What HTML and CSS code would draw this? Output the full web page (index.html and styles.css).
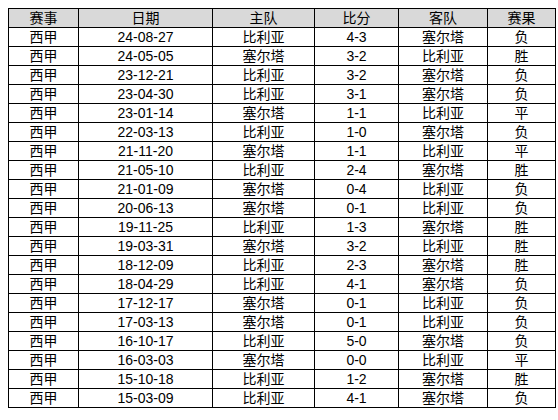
FILE: index.html
```html
<!DOCTYPE html>
<html lang="zh">
<head>
<meta charset="utf-8">
<link rel="stylesheet" href="styles.css">
</head>
<body>
<table class="results">
<colgroup>
<col class="c1"><col class="c2"><col class="c3"><col class="c4"><col class="c5"><col class="c6">
</colgroup>
<thead>
<tr><th>赛事</th><th>日期</th><th>主队</th><th>比分</th><th>客队</th><th>赛果</th></tr>
</thead>
<tbody>
<tr><td>西甲</td><td>24-08-27</td><td>比利亚</td><td>4-3</td><td>塞尔塔</td><td>负</td></tr>
<tr><td>西甲</td><td>24-05-05</td><td>塞尔塔</td><td>3-2</td><td>比利亚</td><td>胜</td></tr>
<tr><td>西甲</td><td>23-12-21</td><td>比利亚</td><td>3-2</td><td>塞尔塔</td><td>负</td></tr>
<tr><td>西甲</td><td>23-04-30</td><td>比利亚</td><td>3-1</td><td>塞尔塔</td><td>负</td></tr>
<tr><td>西甲</td><td>23-01-14</td><td>塞尔塔</td><td>1-1</td><td>比利亚</td><td>平</td></tr>
<tr><td>西甲</td><td>22-03-13</td><td>比利亚</td><td>1-0</td><td>塞尔塔</td><td>负</td></tr>
<tr><td>西甲</td><td>21-11-20</td><td>塞尔塔</td><td>1-1</td><td>比利亚</td><td>平</td></tr>
<tr><td>西甲</td><td>21-05-10</td><td>比利亚</td><td>2-4</td><td>塞尔塔</td><td>胜</td></tr>
<tr><td>西甲</td><td>21-01-09</td><td>塞尔塔</td><td>0-4</td><td>比利亚</td><td>负</td></tr>
<tr><td>西甲</td><td>20-06-13</td><td>塞尔塔</td><td>0-1</td><td>比利亚</td><td>负</td></tr>
<tr><td>西甲</td><td>19-11-25</td><td>比利亚</td><td>1-3</td><td>塞尔塔</td><td>胜</td></tr>
<tr><td>西甲</td><td>19-03-31</td><td>塞尔塔</td><td>3-2</td><td>比利亚</td><td>胜</td></tr>
<tr><td>西甲</td><td>18-12-09</td><td>比利亚</td><td>2-3</td><td>塞尔塔</td><td>胜</td></tr>
<tr><td>西甲</td><td>18-04-29</td><td>比利亚</td><td>4-1</td><td>塞尔塔</td><td>负</td></tr>
<tr><td>西甲</td><td>17-12-17</td><td>塞尔塔</td><td>0-1</td><td>比利亚</td><td>负</td></tr>
<tr><td>西甲</td><td>17-03-13</td><td>塞尔塔</td><td>0-1</td><td>比利亚</td><td>负</td></tr>
<tr><td>西甲</td><td>16-10-17</td><td>比利亚</td><td>5-0</td><td>塞尔塔</td><td>负</td></tr>
<tr><td>西甲</td><td>16-03-03</td><td>塞尔塔</td><td>0-0</td><td>比利亚</td><td>平</td></tr>
<tr><td>西甲</td><td>15-10-18</td><td>比利亚</td><td>1-2</td><td>塞尔塔</td><td>胜</td></tr>
<tr><td>西甲</td><td>15-03-09</td><td>比利亚</td><td>4-1</td><td>塞尔塔</td><td>负</td></tr>
</tbody>
</table>
</body>
</html>
```

FILE: styles.css
```css
html, body {
  margin: 0;
  padding: 0;
  background: #ffffff;
}
body {
  padding: 8px;
  font-family: "Liberation Sans", "Noto Sans CJK SC", sans-serif;
  font-size: 14px;
  color: #000000;
}
.results {
  border-collapse: collapse;
  table-layout: fixed;
  width: 547px;
}
.c1 { width: 70px; }
.c2 { width: 134px; }
.c3 { width: 102px; }
.c4 { width: 84px; }
.c5 { width: 89px; }
.c6 { width: 68px; }
.results th,
.results td {
  border: 1px solid #000000;
  height: 18px;
  padding: 0;
  text-align: center;
  vertical-align: middle;
  line-height: 18px;
  font-weight: normal;
  white-space: nowrap;
  overflow: hidden;
}
.results thead th {
  background: #d9d9d9;
}
```
